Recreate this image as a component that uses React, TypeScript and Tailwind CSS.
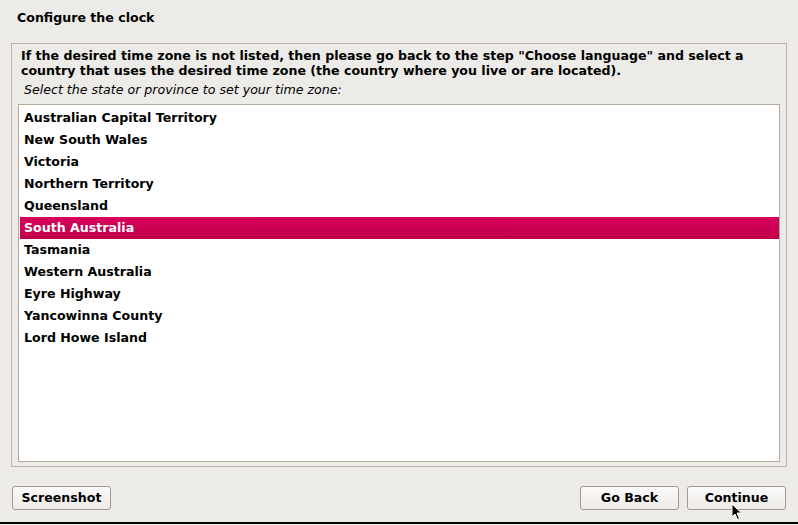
import React from "react";

const regions = [
  "Australian Capital Territory",
  "New South Wales",
  "Victoria",
  "Northern Territory",
  "Queensland",
  "South Australia",
  "Tasmania",
  "Western Australia",
  "Eyre Highway",
  "Yancowinna County",
  "Lord Howe Island",
];

const selected = "South Australia";

function Button({ label }: { label: string }) {
  return (
    <button className="h-[24px] w-[99px] rounded-[3px] border border-[#a39a8c] bg-gradient-to-b from-[#fbfaf9] to-[#eeebe7] text-[12.6px] font-bold text-black leading-none">
      {label}
    </button>
  );
}

export default function App() {
  return (
    <div
      className="relative w-[798px] h-[525px] bg-[#edebe7] flex flex-col text-black overflow-hidden"
      style={{ fontFamily: '"DejaVu Sans", Verdana, sans-serif' }}
    >
      {/* Title */}
      <div className="h-[43px] pl-[17px] pt-[10px] text-[12.6px] font-bold leading-[15px]">
        Configure the clock
      </div>

      {/* Frame */}
      <div className="mx-[11px] h-[424px] border border-[#bdb4a7] px-[6px] pt-[4px] pb-[4px] flex flex-col">
        <p className="pl-[3px] text-[12.6px] font-bold leading-[15px] whitespace-nowrap">
          If the desired time zone is not listed, then please go back to the step "Choose language" and select a
          <br />
          country that uses the desired time zone (the country where you live or are located).
        </p>
        <p className="mt-[4px] pl-[6px] text-[12.6px] italic leading-[15px]">
          Select the state or province to set your time zone:
        </p>

        {/* List */}
        <div className="mt-[7px] flex-1 border border-[#b3a899] bg-white pl-[1px] pt-[2px]">
          {regions.map((r) => (
            <div
              key={r}
              className={`h-[22px] flex items-center pl-[4px] text-[12.6px] font-bold ${
                r === selected
                  ? "bg-gradient-to-b from-[#d8005c] to-[#c0004c] text-white"
                  : "text-black"
              }`}
            >
              {r}
            </div>
          ))}
        </div>
      </div>

      {/* Buttons */}
      <div className="mt-[19px] px-[12px] flex items-center">
        <Button label="Screenshot" />
        <div className="flex-1" />
        <div className="flex gap-[8px]">
          <Button label="Go Back" />
          <Button label="Continue" />
        </div>
      </div>

      <div className="mt-auto mb-[1px] h-[2px] bg-black" />

      {/* Mouse pointer */}
      <svg
        className="absolute left-[731px] top-[503px]"
        width="12"
        height="18"
        viewBox="0 0 12 18"
      >
        <path
          d="M1 1 L1 14 L4 11 L6.5 16.5 L8.5 15.5 L6 10 L10.5 10 Z"
          fill="black"
          stroke="white"
          strokeWidth="1"
        />
      </svg>
    </div>
  );
}
